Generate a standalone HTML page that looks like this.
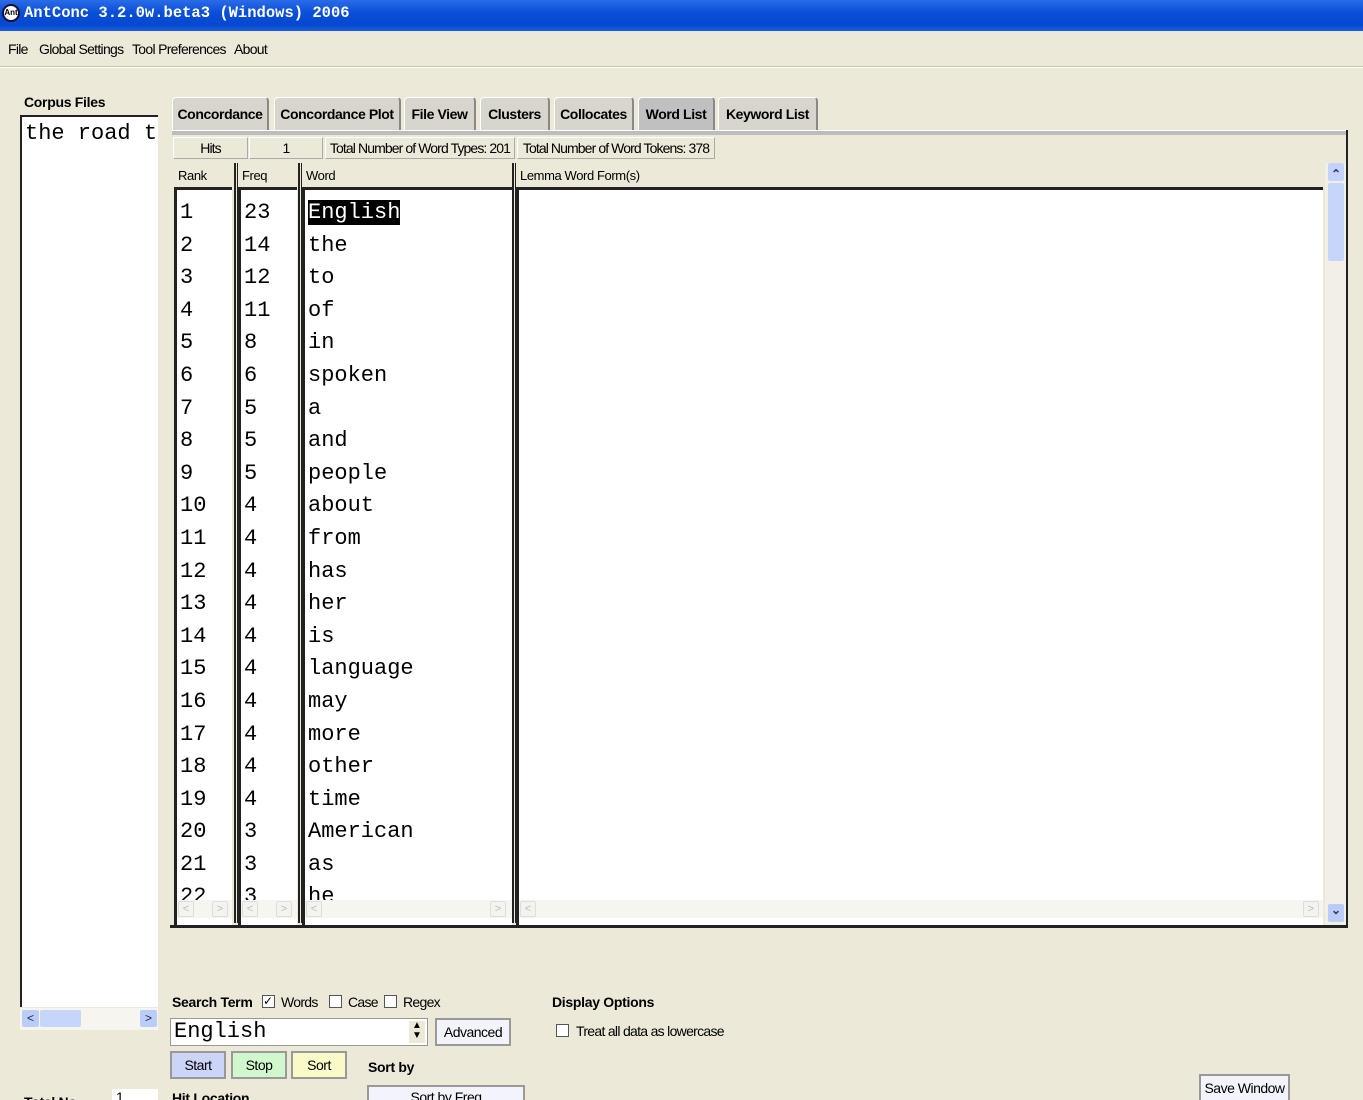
<!DOCTYPE html>
<html><head><style>
*{margin:0;padding:0;box-sizing:border-box}
html,body{width:1363px;height:1100px;overflow:hidden}
body{background:#ece9d8;font-family:"Liberation Sans",sans-serif;font-size:14px;position:relative}
.a{position:absolute}
.title{left:0;top:0;width:1363px;height:31px;background:linear-gradient(#2a6be8,#0a4fd8 40%,#0548d0 80%,#1c5fe0);color:#fff;font-family:"Liberation Mono",monospace;font-weight:bold;font-size:15.5px;line-height:26px;padding-left:24px}
.menu{top:41px;font-size:14px;letter-spacing:-0.7px}
.b{font-weight:bold;font-size:14px;letter-spacing:-0.3px}
.tab{top:97px;height:33px;background:#d8d5cc;border:1px solid #fff;border-right:2px solid #888;border-bottom:none;border-radius:4px 4px 0 0;font-weight:bold;font-size:14px;line-height:32px;text-align:center;letter-spacing:-0.4px}
.cell{top:137px;height:22px;border:1px solid #aaa;border-top-color:#fff;border-left-color:#fff;background:#ece9d8;font-size:14px;line-height:20px;text-align:center;letter-spacing:-0.9px;white-space:nowrap;overflow:hidden}
.hdr{top:163px;height:27px;font-size:13px;line-height:26px;padding-left:4px;letter-spacing:-0.4px;border-bottom:3px solid #222;background:#ece9d8}
.list{top:190px;height:735px;background:#fff;border-left:3px solid #222;overflow:hidden;font-family:"Liberation Mono",monospace;font-size:22px;line-height:32.6px;padding-left:3px;padding-top:7px}
.hs{top:900px;height:18px;background:#f6f5f0}
.ar{top:901px;width:16px;height:16px;border:1px solid #ddd;border-radius:2px;color:#bbb;font-size:11px;text-align:center;line-height:14px;background:#f4f3ee}
.btn{height:26px;border:2px solid #999;font-size:14px;line-height:22px;text-align:center;letter-spacing:-0.5px}
.cb{width:13px;height:13px;border:1px solid #555;background:#fff}
</style></head><body>
<div class="a title">AntConc 3.2.0w.beta3 (Windows) 2006</div>
<div class="a" style="left:2px;top:4px;width:18px;height:18px;border-radius:50%;background:#fff;border:2px solid #113;font-size:8px;font-weight:bold;line-height:14px;text-align:center;color:#000">Ant</div>
<div class="a menu" style="left:8px">File</div>
<div class="a menu" style="left:39px">Global Settings</div>
<div class="a menu" style="left:132px">Tool Preferences</div>
<div class="a menu" style="left:234px">About</div>
<div class="a" style="left:0;top:66px;width:1363px;height:2px;background:#c8c4b4;border-bottom:1px solid #fff"></div>

<div class="a b" style="left:24px;top:94px">Corpus Files</div>
<div class="a" style="left:20px;top:115px;width:138px;height:892px;background:#fff;border-left:2px solid #222;border-top:2px solid #222;overflow:hidden;font-family:'Liberation Mono',monospace;font-size:22px;white-space:nowrap;padding:4px 3px">the road to</div>
<div class="a" style="left:20px;top:1008px;width:138px;height:22px;background:#f6f5f0"></div>
<div class="a" style="left:22px;top:1010px;width:17px;height:17px;background:#b9cdf8;border-radius:2px;color:#224;font-size:12px;text-align:center;line-height:17px">&lt;</div>
<div class="a" style="left:40px;top:1010px;width:41px;height:17px;background:#c6d6fa;border-radius:2px"></div>
<div class="a" style="left:140px;top:1010px;width:17px;height:17px;background:#b9cdf8;border-radius:2px;color:#224;font-size:12px;text-align:center;line-height:17px">&gt;</div>

<div class="a tab" style="left:172px;width:97px">Concordance</div>
<div class="a tab" style="left:274px;width:127px">Concordance Plot</div>
<div class="a tab" style="left:404px;width:72px">File View</div>
<div class="a tab" style="left:480px;width:70px">Clusters</div>
<div class="a tab" style="left:554px;width:80px">Collocates</div>
<div class="a tab" style="left:638px;width:77px;background:#c0c0c0">Word List</div>
<div class="a tab" style="left:718px;width:100px">Keyword List</div>
<div class="a" style="left:172px;top:130px;width:1176px;height:5px;background:#bdbdbd;border-top:1px solid #fff"></div>
<div class="a" style="left:1346px;top:130px;width:2px;height:798px;background:#222"></div>
<div class="a" style="left:170px;top:925px;width:1178px;height:3px;background:#222"></div>

<div class="a cell" style="left:173px;width:75px">Hits</div>
<div class="a cell" style="left:249px;width:74px">1</div>
<div class="a cell" style="left:325px;width:190px">Total Number of Word Types: 201</div>
<div class="a cell" style="left:517px;width:198px">Total Number of Word Tokens: 378</div>

<div class="a hdr" style="left:174px;width:58px">Rank</div>
<div class="a hdr" style="left:238px;width:59px">Freq</div>
<div class="a hdr" style="left:302px;width:210px">Word</div>
<div class="a hdr" style="left:516px;width:807px">Lemma Word Form(s)</div>
<div class="a" style="left:234px;top:163px;width:4px;height:760px;border-left:2px solid #222;border-right:1px solid #222"></div>
<div class="a" style="left:298px;top:163px;width:4px;height:760px;border-left:2px solid #222;border-right:1px solid #222"></div>
<div class="a" style="left:512px;top:163px;width:4px;height:760px;border-left:2px solid #222;border-right:1px solid #222"></div>

<div class="a list" style="left:174px;width:58px">1<br>2<br>3<br>4<br>5<br>6<br>7<br>8<br>9<br>10<br>11<br>12<br>13<br>14<br>15<br>16<br>17<br>18<br>19<br>20<br>21<br>22</div>
<div class="a list" style="left:238px;width:59px">23<br>14<br>12<br>11<br>8<br>6<br>5<br>5<br>5<br>4<br>4<br>4<br>4<br>4<br>4<br>4<br>4<br>4<br>4<br>3<br>3<br>3</div>
<div class="a list" style="left:302px;width:210px"><span style="background:#000;color:#fff">English</span><br>the<br>to<br>of<br>in<br>spoken<br>a<br>and<br>people<br>about<br>from<br>has<br>her<br>is<br>language<br>may<br>more<br>other<br>time<br>American<br>as<br>he</div>
<div class="a list" style="left:516px;width:807px"></div>

<div class="a hs" style="left:177px;width:55px"></div>
<div class="a hs" style="left:241px;width:56px"></div>
<div class="a hs" style="left:305px;width:207px"></div>
<div class="a hs" style="left:519px;width:804px"></div>
<div class="a ar" style="left:178px">&lt;</div><div class="a ar" style="left:212px">&gt;</div>
<div class="a ar" style="left:242px">&lt;</div><div class="a ar" style="left:276px">&gt;</div>
<div class="a ar" style="left:306px">&lt;</div><div class="a ar" style="left:490px">&gt;</div>
<div class="a ar" style="left:520px">&lt;</div><div class="a ar" style="left:1303px">&gt;</div>
<div class="a" style="left:1325px;top:163px;width:21px;height:762px;background:#f1efe6"></div>
<div class="a" style="left:1328px;top:163px;width:16px;height:18px;background:#c3d3fb;border-radius:2px;font-size:12px;font-weight:bold;text-align:center;line-height:22px;color:#335">&#8963;</div>
<div class="a" style="left:1328px;top:183px;width:16px;height:78px;background:#c6d6fb;border-radius:2px"></div>
<div class="a" style="left:1328px;top:904px;width:16px;height:18px;background:#b9cdf8;border-radius:2px;font-size:12px;font-weight:bold;text-align:center;line-height:12px;color:#335">&#8964;</div>

<div class="a b" style="left:172px;top:994px">Search Term</div>
<div class="a cb" style="left:262px;top:995px;font-size:12px;line-height:11px">&#10003;</div>
<div class="a menu" style="left:281px;top:994px">Words</div>
<div class="a cb" style="left:329px;top:995px"></div>
<div class="a menu" style="left:348px;top:994px">Case</div>
<div class="a cb" style="left:384px;top:995px"></div>
<div class="a menu" style="left:403px;top:994px">Regex</div>
<div class="a" style="left:170px;top:1018px;width:258px;height:28px;background:#fff;border:1px solid #999;font-family:'Liberation Mono',monospace;font-size:22px;line-height:26px;padding-left:3px">English</div>
<div class="a" style="left:409px;top:1021px;width:16px;height:22px;background:#ece9d8;font-size:10px;line-height:10px;text-align:center">&#9650;<br>&#9660;</div>
<div class="a btn" style="left:435px;top:1018px;width:76px;height:28px;background:#f3f3fb;line-height:24px">Advanced</div>
<div class="a b" style="left:552px;top:994px">Display Options</div>
<div class="a cb" style="left:556px;top:1024px"></div>
<div class="a menu" style="left:576px;top:1023px">Treat all data as lowercase</div>
<div class="a btn" style="left:170px;top:1051px;width:56px;height:28px;background:#ccd4f8;line-height:24px">Start</div>
<div class="a btn" style="left:231px;top:1051px;width:56px;height:28px;background:#d0f8cc;line-height:24px">Stop</div>
<div class="a btn" style="left:291px;top:1051px;width:56px;height:28px;background:#fafac8;line-height:24px">Sort</div>
<div class="a b" style="left:368px;top:1059px">Sort by</div>
<div class="a btn" style="left:367px;top:1085px;width:158px;height:20px;background:#f3f3fb;line-height:20px">Sort by Freq</div>
<div class="a b" style="left:172px;top:1090px">Hit Location</div>
<div class="a b" style="left:24px;top:1094px">Total No.</div>
<div class="a" style="left:112px;top:1089px;width:46px;height:20px;background:#fff;font-size:14px;padding-left:4px">1</div>
<div class="a btn" style="left:1199px;top:1074px;width:91px;height:28px;background:#f3f3fb;line-height:24px">Save Window</div>
</body></html>
